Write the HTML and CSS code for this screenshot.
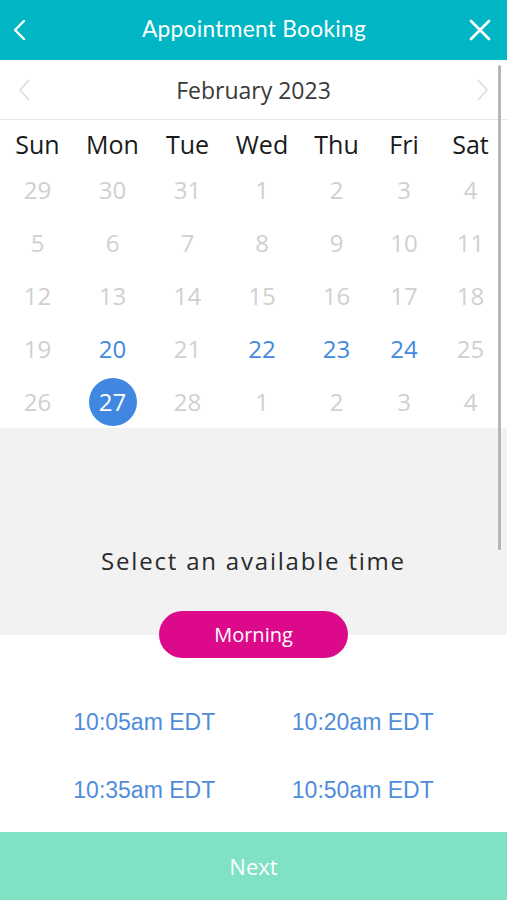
FILE: index.html
```html
<!DOCTYPE html>
<html lang="en">
<head>
    <meta charset="UTF-8">
    <meta name="viewport" content="width=device-width, initial-scale=1.0">
    <title>Appointment Booking</title>
    <link rel="stylesheet" href="styles.css">
</head>
<body>
    <header class="topbar">
        <button class="icon-btn" aria-label="Back">
            <svg width="16" height="24" viewBox="0 0 16 24"><path d="M12 3 L3 12 L12 21" fill="none" stroke="#fff" stroke-width="2.4" stroke-linecap="round" stroke-linejoin="round"/></svg>
        </button>
        <h1>Appointment Booking</h1>
        <button class="icon-btn right" aria-label="Close">
            <svg width="22" height="22" viewBox="0 0 22 22"><path d="M2 2 L20 20 M20 2 L2 20" fill="none" stroke="#fff" stroke-width="2.6" stroke-linecap="round"/></svg>
        </button>
    </header>

    <div class="month-nav">
        <svg width="14" height="24" viewBox="0 0 14 24"><path d="M11 2 L2 12 L11 22" fill="none" stroke="#dcdcdc" stroke-width="1.6"/></svg>
        <span class="month">February 2023</span>
        <svg width="14" height="24" viewBox="0 0 14 24"><path d="M3 2 L12 12 L3 22" fill="none" stroke="#dcdcdc" stroke-width="1.6"/></svg>
    </div>

    <div class="calendar">
        <div class="week head">
            <span>Sun</span><span>Mon</span><span>Tue</span><span>Wed</span><span>Thu</span><span>Fri</span><span>Sat</span>
        </div>
        <div class="week">
            <span>29</span><span>30</span><span>31</span><span>1</span><span>2</span><span>3</span><span>4</span>
        </div>
        <div class="week">
            <span>5</span><span>6</span><span>7</span><span>8</span><span>9</span><span>10</span><span>11</span>
        </div>
        <div class="week">
            <span>12</span><span>13</span><span>14</span><span>15</span><span>16</span><span>17</span><span>18</span>
        </div>
        <div class="week">
            <span>19</span><span class="open">20</span><span>21</span><span class="open">22</span><span class="open">23</span><span class="open">24</span><span>25</span>
        </div>
        <div class="week">
            <span>26</span><span class="selected"><b>27</b></span><span>28</span><span>1</span><span>2</span><span>3</span><span>4</span>
        </div>
    </div>

    <div class="time-panel">
        <p>Select an available time</p>
    </div>
    <div class="period">
        <span class="pill">Morning</span>
    </div>

    <div class="slots">
        <a href="#">10:05am EDT</a>
        <a href="#">10:20am EDT</a>
        <a href="#">10:35am EDT</a>
        <a href="#">10:50am EDT</a>
    </div>

    <button class="next-btn">Next</button>

    <div class="scrollbar"></div>
</body>
</html>
```

FILE: styles.css
```css
body {
    margin: 0;
    font-family: "Open Sans", Arial, sans-serif;
    background: #fff;
    height: 900px;
    display: flex;
    flex-direction: column;
    position: relative;
    overflow: hidden;
}
.topbar {
    height: 60px;
    background-color: #00b6c4;
    display: flex;
    align-items: center;
    justify-content: space-between;
    padding: 0 16px 0 12px;
    box-sizing: border-box;
}
.topbar h1 {
    margin: 0 0 4px 5px;
    color: #fff;
    font-family: Lato, "Open Sans", sans-serif;
    font-weight: normal;
    font-size: 22.7px;
    letter-spacing: 0.3px;
}
.icon-btn {
    background: none;
    border: none;
    padding: 0;
    width: 26px;
    display: flex;
    cursor: pointer;
}
.icon-btn.right {
    justify-content: flex-end;
}
.month-nav {
    height: 59px;
    border-bottom: 1px solid #e6e6e6;
    display: flex;
    align-items: center;
    justify-content: space-between;
    padding: 0 18px 0 18px;
}
.month {
    font-size: 23px;
    color: #3a3a3a;
}
.week {
    display: grid;
    grid-template-columns: 75px 75px 75px 74px 75px 60px 1fr;
    height: 53px;
    align-items: center;
    justify-items: center;
}
.week span {
    font-size: 24px;
    color: #d0d0d0;
}
.week.head {
    height: 43px;
    padding-top: 4px;
    box-sizing: border-box;
}
.week.head span {
    color: #1a1a1a;
    font-size: 25px;
}
.week .open {
    color: #4389df;
}
.week .selected {
    width: 48px;
    height: 48px;
    border-radius: 50%;
    background-color: #3f87e0;
    display: flex;
    align-items: center;
    justify-content: center;
}
.week .selected b {
    color: #fff;
    font-weight: normal;
}
.time-panel {
    background-color: #f2f2f2;
    height: 207px;
    display: flex;
    align-items: flex-end;
    justify-content: center;
}
.time-panel p {
    margin: 0 0 58px;
    font-size: 24px;
    letter-spacing: 1.8px;
    color: #2b2b2b;
}
.period {
    display: flex;
    justify-content: center;
    margin-top: -24px;
}
.pill {
    width: 189px;
    height: 47px;
    border-radius: 24px;
    background-color: #dc0a8b;
    color: #fff;
    font-size: 20px;
    display: flex;
    align-items: center;
    justify-content: center;
}
.slots {
    display: grid;
    grid-template-columns: 1fr 1fr;
    padding: 51px 35px 0 35px;
    row-gap: 42px;
    flex: 1;
    align-content: start;
}
.slots a {
    font-family: "Liberation Sans", Arial, sans-serif;
    font-size: 23px;
    color: #4f8ddb;
    text-decoration: none;
    text-align: center;
    line-height: 26px;
}
.next-btn {
    height: 68px;
    border: none;
    background-color: #80e1c4;
    color: #fff;
    font-family: "Open Sans", Arial, sans-serif;
    font-size: 22px;
    cursor: pointer;
}
.scrollbar {
    position: absolute;
    left: 498px;
    top: 65px;
    width: 3px;
    height: 485px;
    background-color: #b5b5b5;
    border-radius: 2px;
}
```
